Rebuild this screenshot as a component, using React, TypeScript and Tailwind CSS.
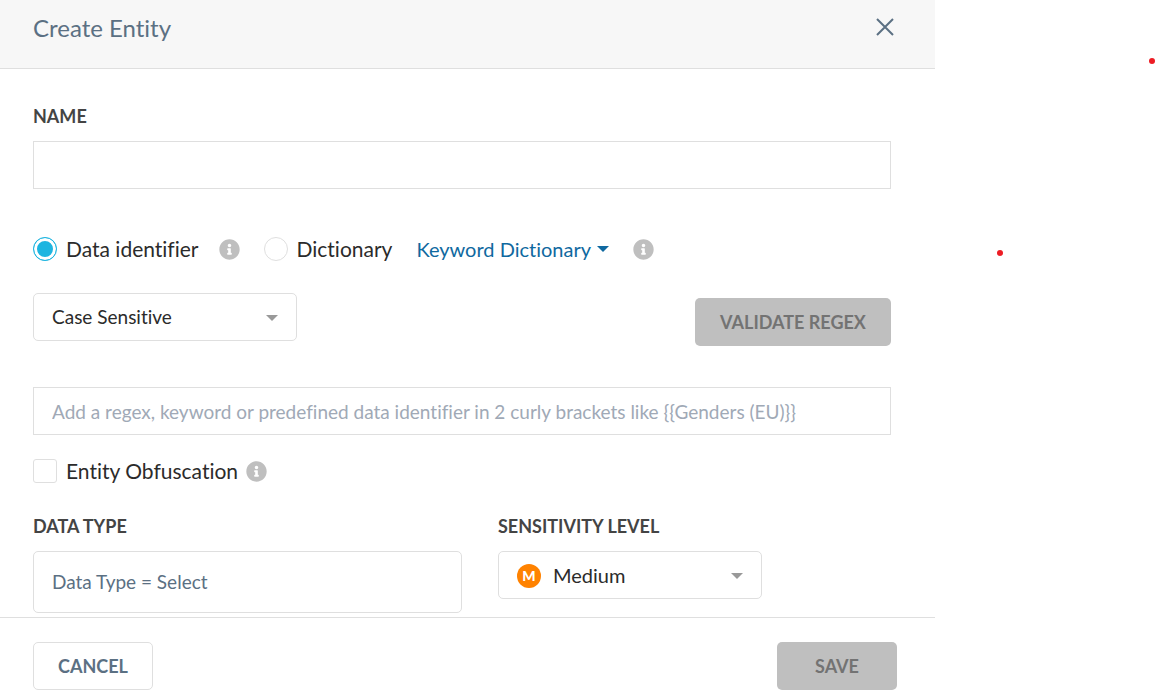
import React, { useState } from 'react';
import { FaInfoCircle } from 'react-icons/fa';

function InfoButton({ label }: { label: string }) {
  return (
    <button type="button" aria-label={label} className="shrink-0 text-[#bfbfbf]">
      <FaInfoCircle size={21} />
    </button>
  );
}

function Caret({ className }: { className: string }) {
  return (
    <svg viewBox="0 0 12 6" aria-hidden="true" className={className} fill="currentColor">
      <path d="M0 0h12L6 6z" />
    </svg>
  );
}

const labelClass = 'block text-lg leading-6 font-bold text-[#444]';
const radioClass =
  'size-6 shrink-0 appearance-none rounded-full border border-[#dfdfdf] bg-white checked:border-[#1eb5e0] checked:bg-[#1eb5e0] checked:shadow-[inset_0_0_0_3px_white]';

export default function App() {
  const [source, setSource] = useState('identifier');

  return (
    <div className="relative min-h-screen bg-white font-['Lato',sans-serif] text-[#2b2b2b] [font-variant-ligatures:none]">
      <form className="w-full max-w-[935px]" onSubmit={(e) => e.preventDefault()}>
        {/* Header */}
        <header className="flex items-start justify-between border-b border-[#dfdfdf] bg-[#f7f7f7] pt-3 pr-9 pb-6 pl-[33px]">
          <h1 className="text-2xl leading-8 text-[#5b7083]">Create Entity</h1>
          <button type="button" aria-label="Close" className="flex h-8 items-center px-1 text-[#5b7083]">
            <svg viewBox="0 0 20 20" className="size-5" fill="none" stroke="currentColor" strokeWidth="2">
              <path d="M2 1l16 16M18 1L2 17" />
            </svg>
          </button>
        </header>

        {/* Fields */}
        <div className="pt-[35px] pr-11 pb-1 pl-[33px]">
          <label htmlFor="name" className={labelClass}>NAME</label>
          <input
            id="name"
            type="text"
            className="mt-[13px] block h-12 w-full border border-[#dfdfdf] px-[18px] text-[19px] outline-none"
          />

          <div className="mt-12 flex items-center">
            <label className="flex items-center gap-[9px] text-[21px] leading-6">
              <input
                type="radio"
                name="source"
                checked={source === 'identifier'}
                onChange={() => setSource('identifier')}
                className={radioClass}
              />
              Data identifier
            </label>
            <div className="ml-5 flex">
              <InfoButton label="About data identifiers" />
            </div>
            <label className="ml-6 flex items-center gap-[9px] text-[21px] leading-6">
              <input
                type="radio"
                name="source"
                checked={source === 'dictionary'}
                onChange={() => setSource('dictionary')}
                className={radioClass}
              />
              Dictionary
            </label>
            <button type="button" className="ml-6 flex items-center gap-1.5 text-xl leading-6 text-[#0f69a0]">
              Keyword Dictionary
              <Caret className="h-1.5 w-3" />
            </button>
            <div className="ml-6 flex">
              <InfoButton label="About dictionaries" />
            </div>
          </div>

          <div className="mt-8 flex items-start justify-between">
            <div className="relative w-[264px]">
              <select
                aria-label="Case sensitivity"
                className="h-12 w-full appearance-none rounded-[5px] border border-[#dfdfdf] bg-white px-[18px] text-[19px]"
              >
                <option>Case Sensitive</option>
                <option>Case Insensitive</option>
              </select>
              <Caret className="pointer-events-none absolute top-[22px] right-[19px] h-1.5 w-3 text-[#999]" />
            </div>
            <button
              type="button"
              disabled
              className="mt-[5px] h-12 w-[196px] rounded-[5px] bg-[#bfbfbf] text-lg font-bold text-[#737373]"
            >
              VALIDATE REGEX
            </button>
          </div>

          <input
            type="text"
            aria-label="Regex, keyword or data identifier"
            placeholder="Add a regex, keyword or predefined data identifier in 2 curly brackets like {{Genders (EU)}}"
            className="mt-[41px] block h-12 w-full border border-[#dfdfdf] px-[18px] text-[19px] outline-none placeholder:text-[#a0a9b6]"
          />

          <div className="mt-6 flex items-center gap-2">
            <label className="flex items-center gap-[9px] text-[21px] leading-6">
              <input
                type="checkbox"
                className="size-6 shrink-0 appearance-none rounded-[3px] border border-[#dfdfdf] bg-white checked:bg-[#1eb5e0]"
              />
              Entity Obfuscation
            </label>
            <InfoButton label="About entity obfuscation" />
          </div>

          <div className="mt-[31px] flex gap-9">
            <div className="w-1/2 shrink-0">
              <label htmlFor="data-type" className={labelClass}>DATA TYPE</label>
              <button
                id="data-type"
                type="button"
                className="mt-[13px] block h-[62px] w-full rounded-[5px] border border-[#dfdfdf] px-[18px] text-left text-[19px] text-[#5b7083]"
              >
                Data Type = Select
              </button>
            </div>
            <div className="flex-1">
              <label htmlFor="level" className={labelClass}>SENSITIVITY LEVEL</label>
              <div className="relative mt-[13px] w-[264px]">
                <select
                  id="level"
                  defaultValue="Medium"
                  className="h-12 w-full appearance-none rounded-[5px] border border-[#dfdfdf] bg-white pr-[18px] pl-[54px] text-xl"
                >
                  <option>Low</option>
                  <option>Medium</option>
                  <option>High</option>
                </select>
                <span className="pointer-events-none absolute top-[13px] left-[19px] flex size-6 items-center justify-center rounded-full bg-[#ff8200] text-sm font-black text-white">
                  M
                </span>
                <Caret className="pointer-events-none absolute top-[22px] right-[19px] h-1.5 w-3 text-[#999]" />
              </div>
            </div>
          </div>
        </div>

        {/* Footer */}
        <footer className="flex justify-between border-t border-[#dfdfdf] pt-6 pr-[38px] pb-2 pl-[33px]">
          <button
            type="button"
            className="h-12 w-[120px] rounded-[5px] border border-[#dfdfdf] text-lg font-bold text-[#5b7083]"
          >
            CANCEL
          </button>
          <button
            type="submit"
            disabled
            className="h-12 w-[120px] rounded-[5px] bg-[#bfbfbf] text-lg font-bold text-[#737373]"
          >
            SAVE
          </button>
        </footer>
      </form>

      {/* Markers */}
      <span className="absolute top-[58px] right-0 size-1.5 rounded-full bg-[#ed1c24]" />
      <span className="absolute top-[250px] left-[997px] size-1.5 rounded-full bg-[#ed1c24]" />
    </div>
  );
}
